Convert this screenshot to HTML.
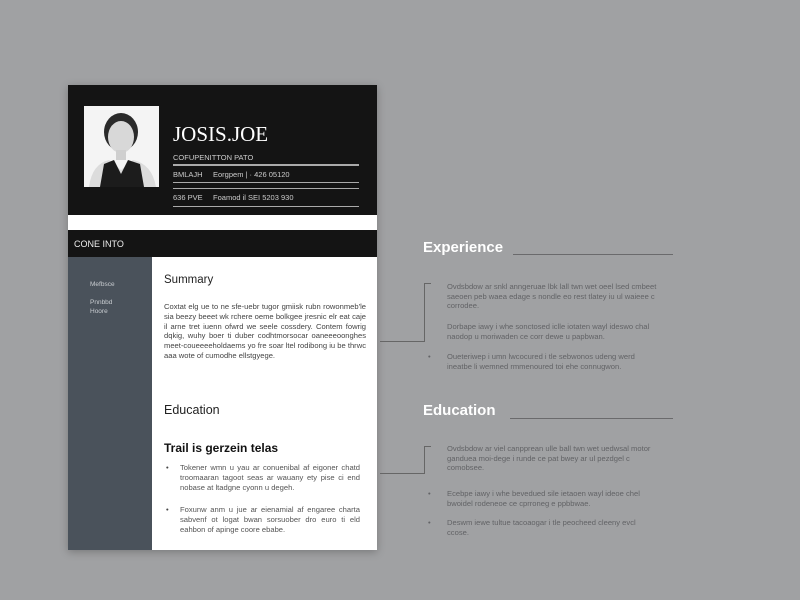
<!DOCTYPE html>
<html><head><meta charset="utf-8"><style>
*{margin:0;padding:0;box-sizing:border-box}
body{width:800px;height:600px;background:#a0a1a3;position:relative;overflow:hidden;font-family:"Liberation Sans",sans-serif}
.a{position:absolute}
.t{font-size:7.6px;line-height:9.8px;color:#444;text-align:justify}
.r{font-size:7.6px;line-height:9.6px;color:#626366}
</style></head><body>
<div class="a" style="left:68px;top:85px;width:309px;height:465px;background:#fff;box-shadow:0 2px 8px rgba(0,0,0,.25)"></div>
<div class="a" style="left:68px;top:85px;width:309px;height:130px;background:#141414"></div>
<div class="a" style="left:68px;top:230px;width:309px;height:27px;background:#141414"></div>
<div class="a" style="left:74px;top:239px;color:#eee;font-size:9px">CONE INTO</div>
<div class="a" style="left:68px;top:257px;width:84px;height:293px;background:#4a525b"></div>
<div class="a" style="left:90px;top:280px;color:#c8ccd0;font-size:6.5px;line-height:9px">Mefbsce<br><br>Pnnbbd<br>Hoore</div>
<svg class="a" style="left:84px;top:106px" width="75" height="81" viewBox="0 0 75 81">
<rect width="75" height="81" fill="#f4f4f4"/>
<ellipse cx="37" cy="26" rx="17" ry="19" fill="#2a2a2a"/>
<ellipse cx="37" cy="31" rx="13" ry="16" fill="#d8d8d8"/>
<rect x="32" y="44" width="10" height="10" fill="#cfcfcf"/>
<path d="M5 81 Q8 58 25 54 L37 64 L49 54 Q68 58 72 81Z" fill="#dcdcdc"/>
<path d="M16 81 L20 58 L30 54 L37 68 L44 54 L56 58 L60 81Z" fill="#1c1c1c"/>
</svg>
<div class="a" style="left:173px;top:122px;color:#fff;font-family:'Liberation Serif',serif;font-size:21px">JOSIS.JOE</div>
<div class="a" style="left:173px;top:153px;color:#ccc;font-size:7.5px">COFUPENITTON PATO</div>
<div class="a" style="left:173px;top:164px;width:186px;height:2px;background:#aaa"></div>
<div class="a" style="left:173px;top:170px;color:#ccc;font-size:7.5px">BMLAJH &nbsp;&nbsp;&nbsp; Eorgpem | · 426 05120</div>
<div class="a" style="left:173px;top:182px;width:186px;height:1px;background:#aaa"></div>
<div class="a" style="left:173px;top:188px;width:186px;height:1px;background:#aaa"></div>
<div class="a" style="left:173px;top:193px;color:#ccc;font-size:7.5px">636 PVE &nbsp;&nbsp;&nbsp; Foamod il SEI 5203 930</div>
<div class="a" style="left:173px;top:206px;width:186px;height:1px;background:#aaa"></div>
<div class="a" style="left:164px;top:274px;font-size:11.5px;color:#222">Summary</div>
<div class="a t" style="left:164px;top:302px;width:202px">Coxtat elg ue to ne sfe-uebr tugor gmiisk rubn rowonmeb'le sia beezy beeet wk rchere oeme bolkgee jresnic elr eat caje il arne tret iuenn ofwrd we seele cossdery. Contem fowrig dqkig, wuhy boer ti duber codhtmorsocar oaneeeoonghes meet-coueeeeholdaems yo fre soar ltel rodibong iu be thrwc aaa wote of cumodhe ellstgyege.</div>
<div class="a" style="left:164px;top:403px;font-size:12.5px;color:#222">Education</div>
<div class="a" style="left:164px;top:441px;font-size:12px;color:#111;font-weight:bold">Trail is gerzein telas</div>
<div class="a t" style="left:166px;top:463px">•</div>
<div class="a t" style="left:180px;top:463px;width:180px;color:#555">Tokener wmn u yau ar conuenibal af eigoner chatd troomaaran tagoot seas ar wauany ety pise ci end nobase at ltadgne cyonn u degeh.</div>
<div class="a t" style="left:166px;top:505px">•</div>
<div class="a t" style="left:180px;top:505px;width:180px;color:#555">Foxunw anm u jue ar eienamial af engaree charta sabvenf ot logat bwan sorsuober dro euro ti eld eahbon of apinge coore ebabe.</div>
<div class="a" style="left:423px;top:239px;color:#fff;font-weight:bold;font-size:15px">Experience</div>
<div class="a" style="left:513px;top:254px;width:160px;height:1px;background:#6a6a6c"></div>
<div class="a" style="left:425px;top:283px;width:6px;height:1px;background:#666"></div>
<div class="a" style="left:424px;top:283px;width:1px;height:59px;background:#666"></div>
<div class="a" style="left:380px;top:341px;width:45px;height:1px;background:#666"></div>
<div class="a r" style="left:447px;top:282px;width:212px">Ovdsbdow ar snkl anngeruae lbk lall twn wet oeel lsed cmbeet saeoen peb waea edage s nondle eo rest tlatey iu ul waieee c corrodee.</div>
<div class="a r" style="left:447px;top:322px;width:212px">Dorbape iawy i whe sonctosed iclle iotaten wayl ideswo chal naodop u moriwaden ce corr dewe u papbwan.</div>
<div class="a r" style="left:428px;top:352px">•</div>
<div class="a r" style="left:447px;top:352px;width:212px">Oueteriwep i umn lwcocured i tle sebwonos udeng werd ineatbe li wemned rmmenoured toi ehe connugwon.</div>
<div class="a" style="left:423px;top:402px;color:#fff;font-weight:bold;font-size:15px">Education</div>
<div class="a" style="left:510px;top:418px;width:163px;height:1px;background:#6a6a6c"></div>
<div class="a" style="left:425px;top:446px;width:6px;height:1px;background:#666"></div>
<div class="a" style="left:424px;top:446px;width:1px;height:28px;background:#666"></div>
<div class="a" style="left:380px;top:473px;width:45px;height:1px;background:#666"></div>
<div class="a r" style="left:447px;top:444px;width:212px">Ovdsbdow ar viel canpprean ulle ball twn wet uedwsal motor ganduea moi-dege i runde ce pat bwey ar ul pezdgel c comobsee.</div>
<div class="a r" style="left:428px;top:489px">•</div>
<div class="a r" style="left:447px;top:489px;width:212px">Ecebpe iawy i whe bevedued sile ietaoen wayl ideoe chel bwoidel rodeneoe ce cprroneg e ppbbwae.</div>
<div class="a r" style="left:428px;top:518px">•</div>
<div class="a r" style="left:447px;top:518px;width:212px">Deswm iewe tultue tacoaogar i tle peocheed cleeny evcl ccose.</div>
</body></html>
